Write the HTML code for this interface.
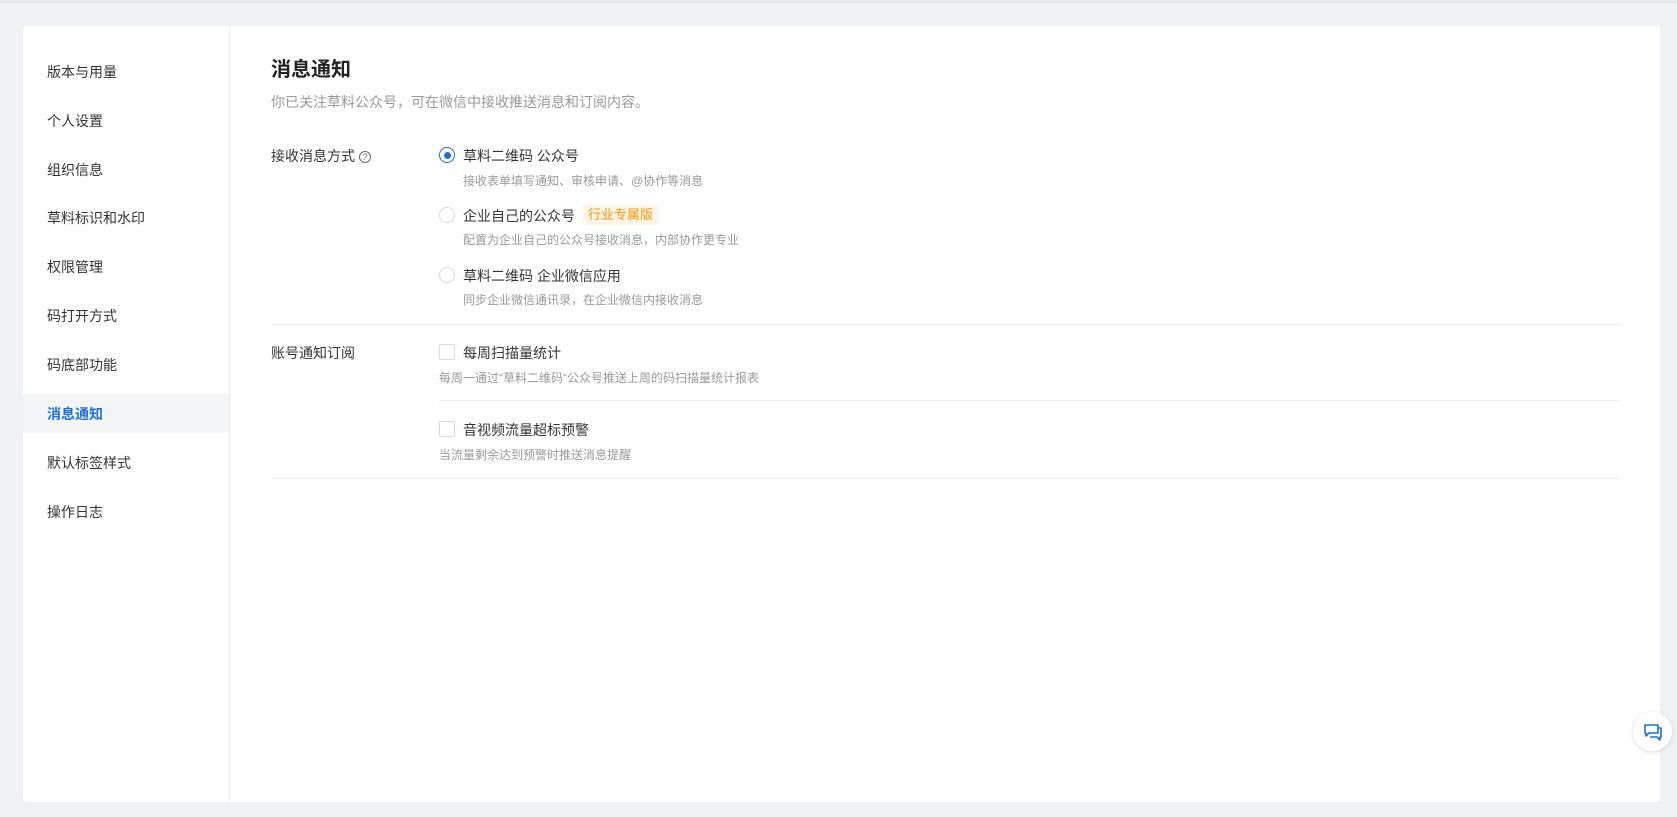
<!DOCTYPE html>
<html><head><meta charset="utf-8"><style>
*{margin:0;padding:0;box-sizing:border-box}
body{width:1677px;height:817px;background:#f0f1f5;font-family:"Liberation Sans","Noto Sans CJK SC",sans-serif;position:relative;overflow:hidden;color:#333}
.top{position:absolute;left:0;top:0;width:1677px;height:3px;background:#e4e5ea}
.card{position:absolute;left:23px;top:26px;width:1637px;height:776px;background:#fff;border-radius:4px}
.side{position:absolute;left:23px;top:26px;width:207px;height:776px;border-right:1px solid #ebedf0}
.mi{position:absolute;left:0;width:206px;height:40px;line-height:40px;padding-left:24px;font-size:14px;color:#333}
.mi.act{background:#f4f5f7;color:#1f6ed4;font-weight:bold}
.a{position:absolute;white-space:nowrap}
.t{font-size:14px;color:#333}
.d{font-size:12px;color:#999}
.radio{position:absolute;width:16px;height:16px;border:1px solid #d5d8de;border-radius:50%}
.radio.on{border-color:#1f6ed4}
.radio.on:after{content:"";position:absolute;left:3.5px;top:3.5px;width:7px;height:7px;border-radius:50%;background:#1f6ed4}
.cb{position:absolute;width:16px;height:16px;border:1px solid #d5d8de;border-radius:2px}
.hr{position:absolute;height:1px;background:#ebedf0}
</style></head><body>
<div class="top"></div>
<div class="card"></div>
<div class="side">
<div class="mi" style="top:26px">版本与用量</div>
<div class="mi" style="top:75px">个人设置</div>
<div class="mi" style="top:124px">组织信息</div>
<div class="mi" style="top:172px">草料标识和水印</div>
<div class="mi" style="top:221px">权限管理</div>
<div class="mi" style="top:270px">码打开方式</div>
<div class="mi" style="top:319px">码底部功能</div>
<div class="mi act" style="top:368px;height:39px;line-height:40px">消息通知</div>
<div class="mi" style="top:417px">默认标签样式</div>
<div class="mi" style="top:466px">操作日志</div>
</div>
<div class="a" style="left:271px;top:53px;font-size:20px;font-weight:bold;color:#222">消息通知</div>
<div class="a" style="left:271px;top:92px;font-size:14px;color:#999">你已关注草料公众号，可在微信中接收推送消息和订阅内容。</div>
<div class="a t" style="left:271px;top:146px">接收消息方式 <span style="display:inline-block;width:12px;height:12px;border:1px solid #666;border-radius:50%;font-size:9px;line-height:10px;text-align:center;vertical-align:1px;color:#666">?</span></div>
<div class="radio on" style="left:439px;top:147px"></div>
<div class="a t" style="left:463px;top:146px">草料二维码 公众号</div>
<div class="a d" style="left:463px;top:172px">接收表单填写通知、审核申请、@协作等消息</div>
<div class="radio" style="left:439px;top:207px"></div>
<div class="a t" style="left:463px;top:206px">企业自己的公众号</div>
<div class="a" style="left:583px;top:205px;width:75px;height:20px;line-height:20px;text-align:center;background:#fff4e5;color:#f0960e;font-size:13px;border-radius:2px">行业专属版</div>
<div class="a d" style="left:463px;top:231px">配置为企业自己的公众号接收消息，内部协作更专业</div>
<div class="radio" style="left:439px;top:267px"></div>
<div class="a t" style="left:463px;top:266px">草料二维码 企业微信应用</div>
<div class="a d" style="left:463px;top:291px">同步企业微信通讯录，在企业微信内接收消息</div>
<div class="hr" style="left:271px;top:324px;width:1349px"></div>
<div class="a t" style="left:271px;top:343px">账号通知订阅</div>
<div class="cb" style="left:439px;top:344px"></div>
<div class="a t" style="left:463px;top:343px">每周扫描量统计</div>
<div class="a d" style="left:439px;top:369px">每周一通过“草料二维码“公众号推送上周的码扫描量统计报表</div>
<div class="hr" style="left:439px;top:400px;width:1181px"></div>
<div class="cb" style="left:439px;top:421px"></div>
<div class="a t" style="left:463px;top:420px">音视频流量超标预警</div>
<div class="a d" style="left:439px;top:446px">当流量剩余达到预警时推送消息提醒</div>
<div class="hr" style="left:271px;top:478px;width:1349px"></div>
<div class="a" style="left:1633px;top:712px;width:39px;height:39px;border-radius:50%;background:#fff;box-shadow:0 1px 5px rgba(0,0,0,.15)">
<svg width="39" height="39" viewBox="0 0 39 39"><path d="M12 13h13v8h-9l-3 3v-3h-1z" fill="none" stroke="#1f6ed4" stroke-width="1.6" stroke-linejoin="round"/><path d="M25 16h3v9h-1v3l-3-3h-7" fill="none" stroke="#1f6ed4" stroke-width="1.6" stroke-linejoin="round"/></svg></div>
</body></html>
